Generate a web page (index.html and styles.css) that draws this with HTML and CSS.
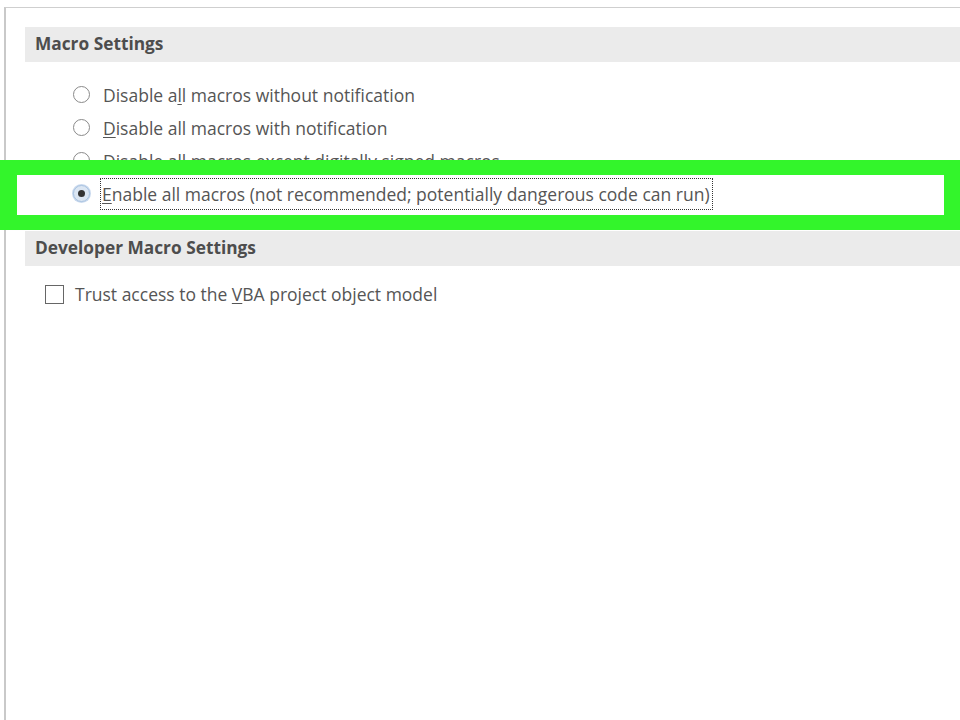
FILE: index.html
```html
<!DOCTYPE html>
<html lang="en">
<head>
    <meta charset="UTF-8">
    <title>Macro Settings</title>
    <link rel="stylesheet" href="styles.css">
</head>
<body>
<div class="panel">
    <div class="section-head">Macro Settings</div>
    <div class="options">
        <label class="option">
            <span class="radio"></span>
            <span class="label">Disable a<u>l</u>l macros without notification</span>
        </label>
        <label class="option">
            <span class="radio"></span>
            <span class="label"><u>D</u>isable all macros with notification</span>
        </label>
        <label class="option">
            <span class="radio"></span>
            <span class="label">Disable all macros e<u>x</u>cept digitally signed macros</span>
        </label>
        <label class="option">
            <span class="radio checked"></span>
            <span class="label focus"><u>E</u>nable all macros (not recommended; potentially dangerous code can run)</span>
        </label>
    </div>
    <div class="section-head dev">Developer Macro Settings</div>
    <label class="check-row">
        <span class="checkbox"></span>
        <span class="label">Trust access to the <u>V</u>BA project object model</span>
    </label>
</div>

<!-- highlight frame drawn over the screenshot -->
<div class="highlight"></div>
</body>
</html>
```

FILE: styles.css
```css
body {
    margin: 0;
    background: #fff;
    font-family: "Open Sans", "Noto Sans", sans-serif;
    color: #555;
    height: 720px;
    overflow: hidden;
}

.panel {
    margin: 7px 0 0 4px;
    border-left: 2px solid #c9c9c9;
    border-top: 1px solid #cfcfcf;
    height: 713px;
    padding-top: 19px;
    box-sizing: border-box;
}

.section-head {
    margin-left: 19px;
    height: 35px;
    line-height: 33px;
    padding-left: 10px;
    background: #ebebeb;
    font-size: 17.3px;
    font-weight: bold;
    color: #4d4d4d;
}

.options {
    display: flex;
    flex-direction: column;
    padding: 16px 0 0 67px;
}

.option {
    display: flex;
    align-items: center;
    height: 33px;
    font-size: 17.5px;
    line-height: 20px;
}

.radio {
    width: 17px;
    height: 17px;
    border: 1px solid #8a8a8a;
    border-radius: 50%;
    box-sizing: border-box;
    margin-right: 13px;
    flex-shrink: 0;
    position: relative;
    background: #fff;
}

.radio.checked {
    border-color: #a9c3e0;
    background: #dbe6f3;
    box-shadow: 0 0 0 1px #c9d9ee;
}

.radio.checked::after {
    content: '';
    position: absolute;
    left: 4px;
    top: 4px;
    width: 7px;
    height: 7px;
    border-radius: 50%;
    background: #333;
}

.label u {
    text-decoration-thickness: 1px;
    text-underline-offset: 2px;
}

.focus {
    outline: 1px dotted #333;
    outline-offset: 0;
    padding: 5px 2px 5px 1px;
    margin-left: -2px;
}

.section-head.dev {
    margin-top: 21px;
}

.check-row {
    display: flex;
    align-items: center;
    height: 20px;
    margin: 18px 0 0 39px;
    font-size: 17.5px;
}

.checkbox {
    width: 19px;
    height: 19px;
    border: 1px solid #666;
    box-sizing: border-box;
    margin-right: 11px;
    background: #fff;
}

.highlight {
    position: absolute;
    left: 0;
    top: 160px;
    width: 960px;
    height: 70px;
    box-sizing: border-box;
    border-style: solid;
    border-color: #33f52b;
    border-width: 15px 16px 15px 17px;
}
```
